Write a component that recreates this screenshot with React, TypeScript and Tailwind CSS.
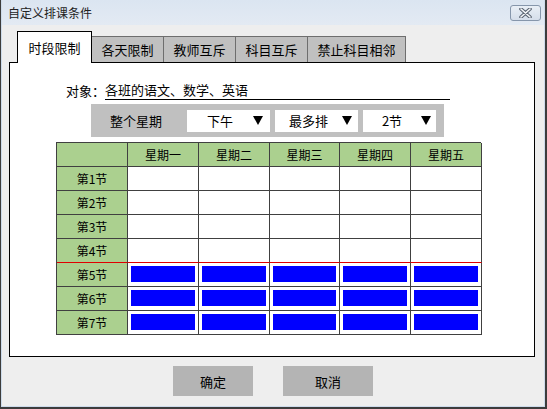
import React from 'react'

const font = { fontFamily: '"Noto Sans CJK SC", "Noto Sans", sans-serif' }

const tabs = ['各天限制', '教师互斥', '科目互斥', '禁止科目相邻']
const days = ['星期一', '星期二', '星期三', '星期四', '星期五']
const periods = ['第1节', '第2节', '第3节', '第4节', '第5节', '第6节', '第7节']

function Arrow() {
    return (
        <svg width="10" height="9" viewBox="0 0 10 9" className="shrink-0">
            <polygon points="0,0 10,0 5,9" fill="#000" />
        </svg>
    )
}

function Select({ label, w, pr }: { label: string; w: string; pr: string }) {
    return (
        <div className={`${w} ${pr} h-[22px] bg-white flex items-center`}>
            <span className="flex-1 text-center text-[13px] leading-none">{label}</span>
            <Arrow />
        </div>
    )
}

export default function App() {
    return (
        <div className="w-[547px] h-[409px] bg-[#3c3c3c] pl-px pr-[2px] pb-[2px] text-black" style={font}>
            <div className="w-full h-full bg-[#eeeeee] border-l border-r border-b border-[#cddbea] flex flex-col">

                {/* Title bar */}
                <div className="h-[25px] shrink-0 bg-gradient-to-b from-[#dbe5f1] to-[#e3eaf3] flex items-center justify-between pl-[6px] pr-[3px]">
                    <span className="text-[12px] text-[#222] leading-none">自定义排课条件</span>
                    <div className="w-[31px] h-[16px] mt-[1px] rounded-[3px] border border-[#8696ab] bg-gradient-to-b from-[#e9eff6] to-[#d5deea] flex items-center justify-center">
                        <svg width="13" height="10" viewBox="0 0 13 10">
                            <path d="M2 1 L11 9 M11 1 L2 9" stroke="#5a6472" strokeWidth="3.6" strokeLinecap="round" />
                            <path d="M2 1 L11 9 M11 1 L2 9" stroke="#f4f6f8" strokeWidth="1.6" strokeLinecap="round" />
                        </svg>
                    </div>
                </div>

                {/* Tabs */}
                <div className="mt-[6px] ml-[15px] flex items-end">
                    <div className="w-[75px] h-[32px] -mb-px z-10 bg-white border border-b-0 border-black flex items-center justify-center text-[13px] leading-none">
                        时段限制
                    </div>
                    {tabs.map((t, i) => (
                        <div
                            key={t}
                            className={`${i === 3 ? 'w-[98px]' : 'w-[72px]'} h-[26px] bg-[#c0c0c0] border-t border-r border-[#6e6e6e] flex items-center justify-center text-[13px] leading-none`}
                        >
                            {t}
                        </div>
                    ))}
                </div>

                {/* Panel */}
                <div className="ml-[7px] w-[526px] h-[295px] bg-white border border-black flex flex-col">
                    <div className="mt-[17px] ml-[56px] flex items-end">
                        <span className="w-[39px] text-[13px] leading-[19px]">对象：</span>
                        <span className="w-[345px] border-b border-black text-[13px] leading-[19px]">各班的语文、数学、英语</span>
                    </div>

                    <div className="mt-[4px] ml-[81px] w-[353px] h-[33px] bg-[#c0c0c0] flex items-center">
                        <span className="w-[96px] pl-[19px] text-[13px] leading-none">整个星期</span>
                        <Select label="下午" w="w-[83px]" pr="pr-[7px]" />
                        <div className="w-[5px]" />
                        <Select label="最多排" w="w-[83px]" pr="pr-[6px]" />
                        <div className="w-[5px]" />
                        <Select label="2节" w="w-[73px]" pr="pr-[5px]" />
                    </div>

                    {/* Grid */}
                    <div className="mt-[5px] ml-[46px] w-[425px] grid grid-cols-[71px_71px_71px_70px_71px_71px] border-l border-t border-[#404040] text-[12px]">
                        <div className="h-[24px] bg-[#abd08f] border-r border-b border-[#404040]" />
                        {days.map((d) => (
                            <div key={d} className="h-[24px] bg-[#abd08f] border-r border-b border-[#404040] flex items-center justify-center leading-none">
                                {d}
                            </div>
                        ))}
                        {periods.map((p, r) => {
                            const red = r === 3 ? 'border-b-[#e00000]' : ''
                            return (
                                <React.Fragment key={p}>
                                    <div className={`h-[24px] bg-[#abd08f] border-r border-b border-[#404040] ${red} flex items-center justify-center leading-none`}>
                                        {p}
                                    </div>
                                    {days.map((d) => (
                                        <div key={d} className={`h-[24px] bg-white border-r border-b border-[#404040] ${red} px-[3px] pt-[3px] pb-[4px]`}>
                                            {r >= 4 && <div className="w-full h-full bg-[#0000ff]" />}
                                        </div>
                                    ))}
                                </React.Fragment>
                            )
                        })}
                    </div>
                </div>

                {/* Buttons */}
                <div className="mt-[9px] flex justify-center gap-[30px]">
                    <button className="w-[80px] h-[30px] bg-[#b4b4b4] text-[13px] leading-none">确定</button>
                    <button className="w-[90px] h-[30px] bg-[#b4b4b4] text-[13px] leading-none">取消</button>
                </div>
            </div>
        </div>
    )
}
